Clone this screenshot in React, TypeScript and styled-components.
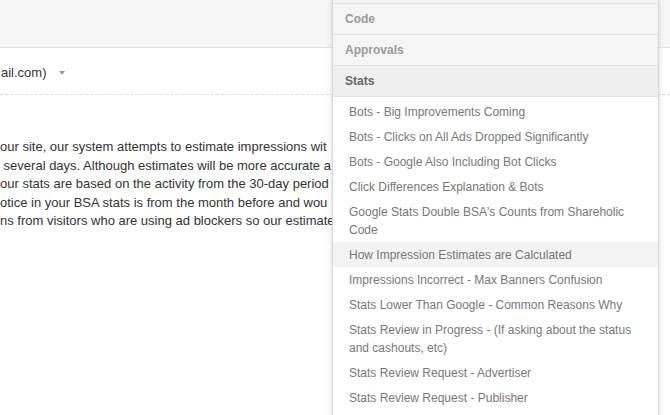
import React from 'react';
import styled, { createGlobalStyle } from 'styled-components';

const GlobalStyle = createGlobalStyle`
  html, body {
    margin: 0;
    padding: 0;
    background: #fff;
    overflow: hidden;
  }
  body {
    font-family: "Liberation Sans", Helvetica, Arial, sans-serif;
  }
`;

const Page = styled.div`
  position: relative;
  width: 670px;
  height: 415px;
  overflow: hidden;
`;

const TopBar = styled.div`
  height: 47px;
  background: #f7f7f7;
  border-bottom: 1px solid #e3e3e3;
`;

const AccountRow = styled.div`
  display: flex;
  align-items: center;
  gap: 12px;
  height: 47px;
  padding: 2px 0 0 1px;
  box-sizing: border-box;
  border-bottom: 1px dashed #dcdcdc;
  font-size: 13px;
  color: #333;
`;

const AccountName = styled.span`
  white-space: nowrap;
`;

const Caret = styled.span`
  width: 0;
  height: 0;
  border-left: 3.5px solid transparent;
  border-right: 3.5px solid transparent;
  border-top: 4px solid #999;
  margin-top: 1px;
`;

const Article = styled.div`
  width: 332px;
  overflow: hidden;
  padding-top: 43px;
  font-size: 13px;
  line-height: 18.5px;
  color: #333;
`;

const Line = styled.div`
  white-space: pre;
`;

const Panel = styled.div`
  position: absolute;
  top: 0;
  left: 332px;
  width: 327px;
  height: 430px;
  box-sizing: border-box;
  background: #fff;
  border-left: 1px solid #d6d6d6;
  border-right: 1px solid #d6d6d6;
  box-shadow: 0 0 6px rgba(0, 0, 0, 0.14);
`;

const Stub = styled.div`
  height: 3px;
  background: #f5f5f5;
  border-bottom: 1px solid #e2e2e2;
`;

const Category = styled.div<{ $open?: boolean }>`
  height: 30px;
  display: flex;
  align-items: center;
  padding-left: 12px;
  font-size: 12px;
  font-weight: bold;
  color: ${p => (p.$open ? '#666' : '#9a9a9a')};
  background: ${p => (p.$open ? '#efefef' : '#f5f5f5')};
  border-bottom: 1px solid #e2e2e2;
`;

const ArticleList = styled.ul`
  list-style: none;
  margin: 0;
  padding: 2px 0 0;
`;

const Item = styled.li<{ $active?: boolean }>`
  padding: 3.5px 16px;
  font-size: 12px;
  line-height: 18px;
  color: #777;
  background: ${p => (p.$active ? '#f3f3f3' : 'transparent')};
`;

const lines = [
  'our site, our system attempts to estimate impressions wit',
  ' several days. Although estimates will be more accurate a',
  'our stats are based on the activity from the 30-day period',
  'otice in your BSA stats is from the month before and wou',
  'ns from visitors who are using ad blockers so our estimate',
];

const articles = [
  'Bots - Big Improvements Coming',
  'Bots - Clicks on All Ads Dropped Significantly',
  'Bots - Google Also Including Bot Clicks',
  'Click Differences Explanation & Bots',
  "Google Stats Double BSA's Counts from Shareholic Code",
  'How Impression Estimates are Calculated',
  'Impressions Incorrect - Max Banners Confusion',
  'Stats Lower Than Google - Common Reasons Why',
  'Stats Review in Progress - (If asking about the status and cashouts, etc)',
  'Stats Review Request - Advertiser',
  'Stats Review Request - Publisher',
];

const App: React.FC = () => {
  return (
    <Page>
      <GlobalStyle />
      <TopBar />
      <AccountRow>
        <AccountName>ail.com)</AccountName>
        <Caret />
      </AccountRow>
      <Article>
        {lines.map(l => (
          <Line key={l}>{l}</Line>
        ))}
      </Article>

      <Panel>
        <Stub />
        <Category>Code</Category>
        <Category>Approvals</Category>
        <Category $open>Stats</Category>
        <ArticleList>
          {articles.map(a => (
            <Item key={a} $active={a === 'How Impression Estimates are Calculated'}>
              {a}
            </Item>
          ))}
        </ArticleList>
      </Panel>
    </Page>
  );
};

export default App;
